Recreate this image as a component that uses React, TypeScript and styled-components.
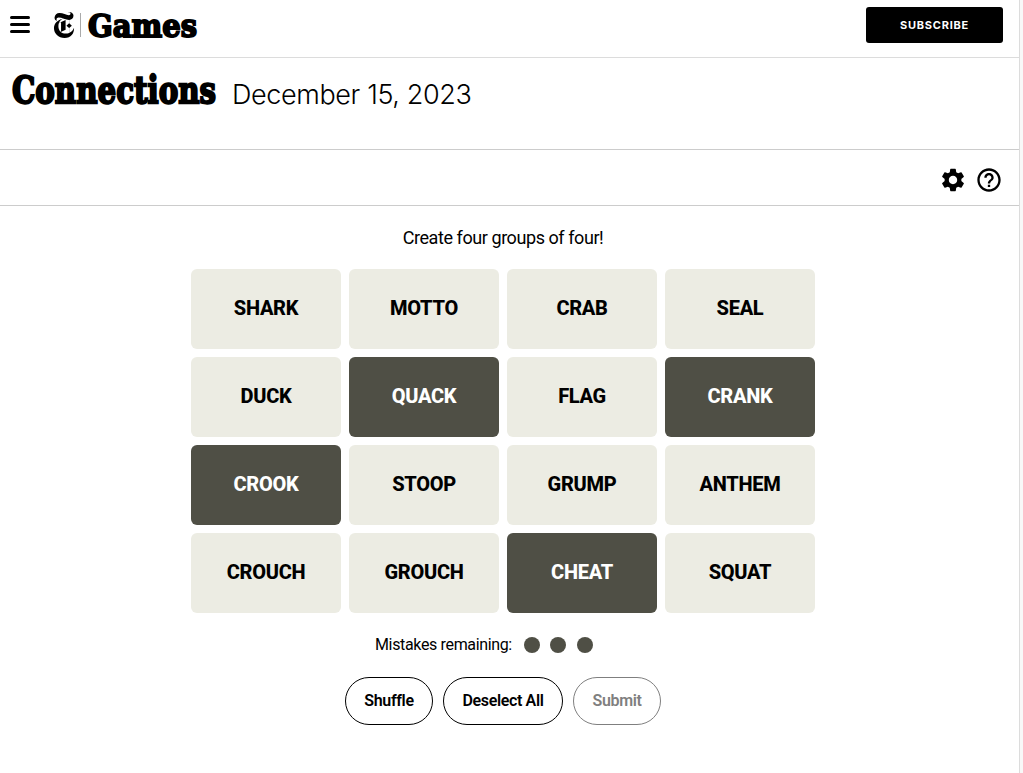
import React from 'react';
import styled, { createGlobalStyle } from 'styled-components';
import { SiNewyorktimes } from 'react-icons/si';
import { MdSettings, MdHelpOutline } from 'react-icons/md';

const GlobalStyle = createGlobalStyle`
  * { box-sizing: border-box; }
  html, body { margin: 0; background: #fff; overflow: hidden; }
  body { font-family: Roboto, "Liberation Sans", sans-serif; color: #000; }
  button { font-family: inherit; margin: 0; cursor: pointer; }
`;

const Page = styled.div`
  display: flex;
  height: 773px;
  background: #f8f8f8;
`;
const Main = styled.main`
  width: 1020px;
  border-right: 1px solid #dcdcdc;
  background: #fff;
`;
const Header = styled.header`
  display: flex;
  align-items: flex-start;
  height: 58px;
  padding: 0 16px 0 10px;
  border-bottom: 1px solid #dcdcdc;
`;
const Menu = styled.div`
  display: flex;
  flex-direction: column;
  gap: 4px;
  width: 20px;
  margin: 16px 23px 0 0;
`;
const MenuBar = styled.span`
  height: 3px;
  border-radius: 1.5px;
  background: #000;
`;
const Mark = styled(SiNewyorktimes)`
  width: 26px;
  height: 26px;
  margin: 12px 0 0 -2px;
`;
const Divider = styled.span`
  width: 1px;
  height: 24px;
  margin: 13px 6px 0 3px;
  background: #aaa;
`;
const Wordmark = styled.svg`
  display: block;
  overflow: visible;
  font-family: "DejaVu Serif", serif;
  font-weight: 700;
  stroke: #000;
`;
const Subscribe = styled.button`
  width: 137px;
  height: 36px;
  margin: 7px 0 0 auto;
  padding: 0;
  border: 0;
  border-radius: 3px;
  background: #000;
  color: #fff;
  font: 700 11px Inter, sans-serif;
  letter-spacing: 0.75px;
`;
const TitleRow = styled.section`
  display: flex;
  height: 92px;
  padding-left: 12px;
  border-bottom: 1px solid #ccc;
`;
const DateText = styled.span`
  margin: 20px 0 0 16px;
  font: 300 27px/34px Inter, sans-serif;
  letter-spacing: -0.38px;
`;
const Toolbar = styled.div`
  display: flex;
  align-items: center;
  justify-content: flex-end;
  gap: 8px;
  height: 56px;
  padding: 4px 16px 0 0;
  border-bottom: 1px solid #ccc;
  svg { width: 28px; height: 28px; }
`;
const Game = styled.section`
  display: flex;
  flex-direction: column;
  align-items: center;
  width: 1006px;
`;
const Instruction = styled.p`
  margin: 20px 0 19px;
  font-size: 18px;
  line-height: 24px;
  letter-spacing: -0.43px;
`;
const Board = styled.div`
  display: grid;
  grid-template-columns: repeat(4, 150px);
  grid-auto-rows: 80px;
  gap: 8px;
`;
const Tile = styled.button<{ $selected: boolean }>`
  padding: 0 0 2px;
  border: 0;
  border-radius: 6px;
  background: ${(p) => (p.$selected ? '#4f4f45' : '#ecece3')};
  color: ${(p) => (p.$selected ? '#fff' : '#000')};
  font-size: 20px;
  font-weight: 800;
  letter-spacing: -0.3px;
`;
const Mistakes = styled.div`
  display: flex;
  align-items: center;
  width: 256px;
  height: 24px;
  margin-top: 20px;
  font-size: 16px;
`;
const MistakeLabel = styled.span`
  width: 149px;
  padding-bottom: 2px;
  white-space: nowrap;
  letter-spacing: -0.35px;
`;
const Dots = styled.div`
  display: flex;
  gap: 10.4px;
`;
const Dot = styled.span`
  width: 16px;
  height: 16px;
  border-radius: 50%;
  background: #4f4f45;
`;
const Actions = styled.div`
  display: flex;
  gap: 10px;
  margin-top: 20px;
`;
const Action = styled.button<{ $width: number; $muted?: boolean }>`
  width: ${(p) => p.$width}px;
  height: 48px;
  padding: 0 0 1px;
  border: 1px solid ${(p) => (p.$muted ? '#7f7f7f' : '#000')};
  border-radius: 24px;
  background: #fff;
  color: ${(p) => (p.$muted ? '#7f7f7f' : '#000')};
  font-size: 16px;
  font-weight: 600;
  letter-spacing: -0.35px;
  white-space: nowrap;
`;

const words = [
  'SHARK', 'MOTTO', 'CRAB', 'SEAL',
  'DUCK', 'QUACK', 'FLAG', 'CRANK',
  'CROOK', 'STOOP', 'GRUMP', 'ANTHEM',
  'CROUCH', 'GROUCH', 'CHEAT', 'SQUAT',
];
const selected = ['QUACK', 'CRANK', 'CROOK', 'CHEAT'];

export default function App() {
  return (
    <Page>
      <GlobalStyle />
      <Main>
        <Header>
          <Menu><MenuBar /><MenuBar /><MenuBar /></Menu>
          <Mark />
          <Divider />
          <Wordmark width="109" height="50" strokeWidth="1.9">
            <text x="1" y="36.5" fontSize="31" textLength="109" lengthAdjust="spacingAndGlyphs">Games</text>
          </Wordmark>
          <Subscribe>SUBSCRIBE</Subscribe>
        </Header>
        <TitleRow>
          <Wordmark width="204" height="60" strokeWidth="2.3">
            <text transform="scale(0.75 1)" x="0" y="45.5" fontSize="38" textLength="272" lengthAdjust="spacingAndGlyphs">Connections</text>
          </Wordmark>
          <DateText>December 15, 2023</DateText>
        </TitleRow>
        <Toolbar><MdSettings /><MdHelpOutline /></Toolbar>
        <Game>
          <Instruction>Create four groups of four!</Instruction>
          <Board>
            {words.map((word) => (
              <Tile key={word} $selected={selected.includes(word)}>{word}</Tile>
            ))}
          </Board>
          <Mistakes>
            <MistakeLabel>Mistakes remaining:</MistakeLabel>
            <Dots><Dot /><Dot /><Dot /></Dots>
          </Mistakes>
          <Actions>
            <Action $width={88}>Shuffle</Action>
            <Action $width={120}>Deselect All</Action>
            <Action $width={88} $muted>Submit</Action>
          </Actions>
        </Game>
      </Main>
    </Page>
  );
}
